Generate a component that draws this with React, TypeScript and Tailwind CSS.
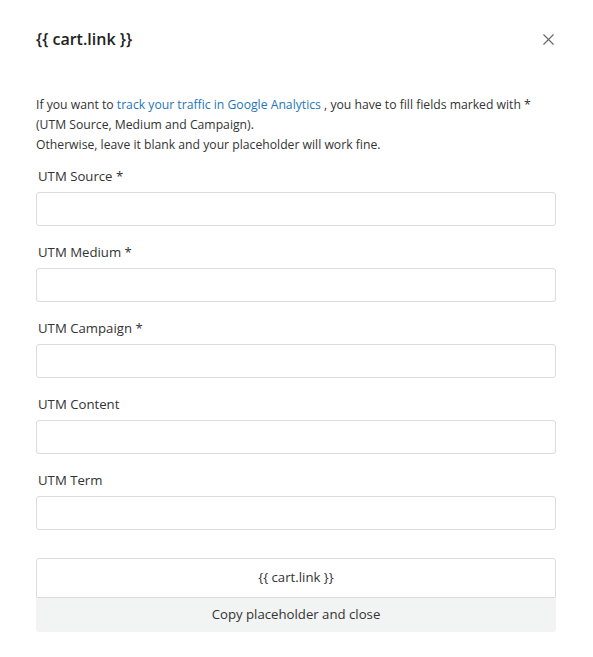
import { X } from "lucide-react"

const fields = [
    { label: "UTM Source *" },
    { label: "UTM Medium *" },
    { label: "UTM Campaign *" },
    { label: "UTM Content" },
    { label: "UTM Term" },
]

const App = () => {
    return (
        <div className="w-[593px] h-[657px] bg-white text-[#333] font-['Open_Sans',sans-serif]">
            <div className="pl-9 pr-[37px] pt-[27px]">
                <div className="flex items-center justify-between h-6">
                    <h2 className="text-[16px] font-semibold text-[#222]">{"{{ cart.link }}"}</h2>
                    <button className="text-[#666] -mr-0.5">
                        <X size={19} strokeWidth={1.4} />
                    </button>
                </div>

                <p className="mt-[44px] text-[12.2px] leading-5 text-[#333]">
                    If you want to <a className="text-[#1f76b8]" href="#">track your traffic in Google Analytics</a> , you have to fill fields marked with *
                    <br />
                    (UTM Source, Medium and Campaign).
                    <br />
                    Otherwise, leave it blank and your placeholder will work fine.
                </p>

                <div className="mt-[10px] flex flex-col">
                    {fields.map((f, idx) => (
                        <div key={idx} className="h-[76px]">
                            <label className="block h-[27px] pl-0.5 text-[13.2px] leading-[22px] text-[#333]">{f.label}</label>
                            <input className="w-full h-[34px] rounded-[3px] border border-[#dcdcdf] bg-white outline-none" />
                        </div>
                    ))}
                </div>

                <div className="mt-[13px] flex flex-col">
                    <div className="h-[40px] flex items-center justify-center rounded-t-[3px] border border-[#dcdcdf] text-[13.2px] text-[#333]">
                        {"{{ cart.link }}"}
                    </div>
                    <button className="h-[34px] flex items-center justify-center rounded-b-[3px] bg-[#f2f3f3] text-[13.2px] text-[#333]">
                        Copy placeholder and close
                    </button>
                </div>
            </div>
        </div>
    )
}

export default App
